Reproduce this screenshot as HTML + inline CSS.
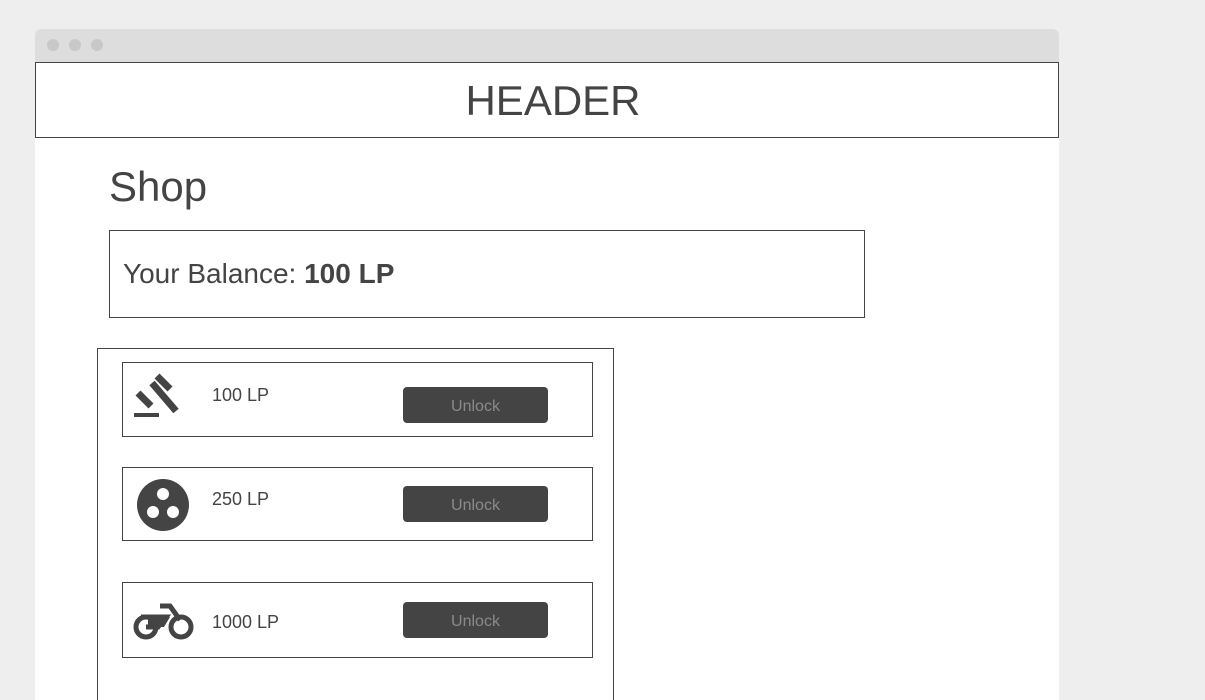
<!DOCTYPE html><html><head><style>
html,body{margin:0;width:1205px;height:700px;overflow:hidden}
body{background:#eeeeee;font-family:"Liberation Sans",sans-serif;color:#444;position:relative}
.a{position:absolute;box-sizing:border-box}
.win{left:35px;top:29px;width:1024px;height:671px;background:#fff;border-radius:6px 6px 0 0}
.tb{left:35px;top:29px;width:1024px;height:33px;background:#dddddd;border-radius:6px 6px 0 0}
.dot{width:12px;height:12px;border-radius:50%;background:#c8c8c8;top:39px}
.box{border:1px solid #444}
.btn{left:403px;width:145px;height:36px;background:#444;border-radius:4px;color:#8a8a8a;font-size:16px;text-align:center;line-height:40px}
.lp{left:212px;font-size:18px}
</style></head><body>
<div class="a win"></div><div class="a tb"></div>
<div class="a dot" style="left:47px"></div><div class="a dot" style="left:69px"></div><div class="a dot" style="left:91px"></div>
<div class="a box" style="left:35px;top:62px;width:1024px;height:76px;text-align:center;font-size:42px;line-height:76px;padding-left:12px">HEADER</div>
<div class="a" style="left:109px;top:163px;font-size:42px">Shop</div>
<div class="a box" style="left:109px;top:230px;width:756px;height:88px;font-size:28px;line-height:86px;padding-left:13px">Your Balance: <b>100 LP</b></div>
<div class="a box" style="left:97px;top:348px;width:517px;height:360px"></div>
<div class="a box" style="left:122px;top:362px;width:471px;height:75px"></div>
<div class="a box" style="left:122px;top:467px;width:471px;height:74px"></div>
<div class="a box" style="left:122px;top:582px;width:471px;height:76px"></div>
<div class="a lp" style="top:385px">100 LP</div>
<div class="a lp" style="top:489px">250 LP</div>
<div class="a lp" style="top:612px">1000 LP</div>
<div class="a btn" style="top:387px">Unlock</div>
<div class="a btn" style="top:486px">Unlock</div>
<div class="a btn" style="top:602px">Unlock</div>
<svg class="a" style="left:0;top:0" width="1205" height="700">
<g stroke="#444" stroke-width="7" fill="none">
<line x1="157" y1="376" x2="170" y2="389"/>
<line x1="138" y1="393" x2="151" y2="406"/>
<line x1="152" y1="383" x2="176" y2="411"/>
<line x1="134" y1="415" x2="159" y2="415" stroke-width="4"/>
</g>
<circle cx="163" cy="505" r="26" fill="#444"/>
<circle cx="163" cy="494" r="6" fill="#fff"/><circle cx="153" cy="512" r="6" fill="#fff"/><circle cx="173" cy="512" r="6" fill="#fff"/>
<g stroke="#444" stroke-width="5" fill="none">
<circle cx="146" cy="627" r="10"/><circle cx="181" cy="627" r="10"/>
<path d="M146 627h12l8-10h-25"/>
<path d="M160 606h10l10 14"/>
</g>
<path d="M148 617h22l-6 10h-16z" fill="#444"/>
</svg>
</body></html>
